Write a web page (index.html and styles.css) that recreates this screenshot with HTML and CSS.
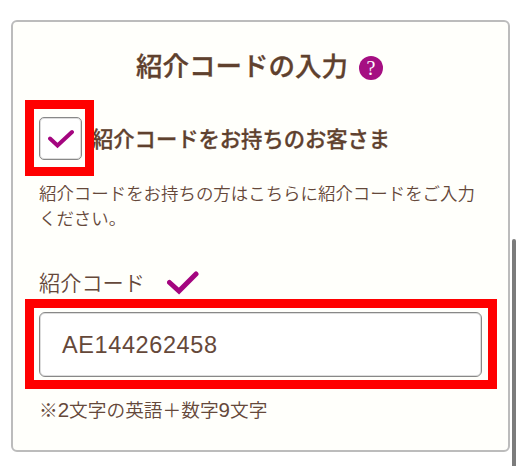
FILE: index.html
```html
<!DOCTYPE html>
<html lang="ja">
<head>
    <meta charset="UTF-8">
    <meta name="viewport" content="width=device-width, initial-scale=1.0">
    <title>紹介コードの入力</title>
    <link rel="stylesheet" href="styles.css">
</head>
<body>
    <section class="card">
        <h1 class="card-title">紹介コードの入力<span class="help">?</span></h1>
        <div class="check-row">
            <div class="checkbox">
                <svg class="check-icon" width="26" height="20" viewBox="0 0 26 20"><path d="M2 9.5L9.5 16.5L24 3"/></svg>
                <span class="mark mark-check"></span>
            </div>
            <span class="check-label">紹介コードをお持ちのお客さま</span>
        </div>
        <p class="desc">紹介コードをお持ちの方はこちらに紹介コードをご入力ください。</p>
        <div class="field-head">
            <span class="field-label">紹介コード</span>
            <svg class="valid-icon" width="32" height="24" viewBox="0 0 32 24"><path d="M2.5 11.5L12 20L29 3"/></svg>
        </div>
        <div class="field">
            <span class="field-value">AE144262458</span>
            <span class="mark mark-field"></span>
        </div>
        <p class="note">※<span class="num">2</span>文字の英語＋数字<span class="num">9</span>文字</p>
    </section>
    <div class="scrollbar"></div>
</body>
</html>
```
FILE: styles.css
```css
* {padding: 0;margin: 0;box-sizing: border-box;}
body {
    position: relative;
    height: 466px;
    padding: 20px 0 0 11px;
    overflow: hidden;
    background: #fff;
    color: #65483a;
    font-family: "Noto Sans CJK JP", sans-serif;
}
.card {
    width: 499px;
    height: 432px;
    padding: 25px 26px 0;
    border: 2px solid #bcbcbc;
    border-radius: 6px;
    background: #fffffb;
}
.card-title {
    display: flex;
    align-items: center;
    justify-content: center;
    height: 36px;
    color: #5f412e;
    font-size: 26.5px;
    font-weight: 500;
    line-height: 36px;
    -webkit-text-stroke: .3px #5f412e;
}
.help {
    width: 24px;
    height: 24px;
    margin: 6px 2px 0 11px;
    border-radius: 50%;
    background: #a50f82;
    color: #fff;
    font-family: "Liberation Serif", serif;
    font-size: 20px;
    font-weight: 400;
    line-height: 24px;
    text-align: center;
    -webkit-text-stroke: 0;
}
.check-row {display: flex;align-items: center;height: 43px;margin-top: 34px;}
.checkbox {
    position: relative;
    display: flex;
    align-items: center;
    justify-content: center;
    width: 43px;
    height: 43px;
    border: 1px solid #888;
    border-radius: 5px;
    background: #fff;
    box-shadow: inset 0 0 0 1px #ddd;
}
.check-icon path, .valid-icon path {fill: none;stroke: #a4057f;stroke-width: 4;stroke-linecap: round;}
.valid-icon path {stroke-width: 5;}
.check-label {
    margin: -3px 0 0 10px;
    color: #5f412e;
    font-size: 21.3px;
    font-weight: 500;
    white-space: nowrap;
    -webkit-text-stroke: .3px #5f412e;
}
.desc {width: 444px;margin-top: 20px;font-size: 17.45px;font-weight: 350;line-height: 25px;}
.field-head {display: flex;align-items: center;height: 32px;margin-top: 36px;}
.field-label {margin-top: -2px;font-size: 21.2px;font-weight: 350;}
.valid-icon {margin: 1px 0 0 22px;}
.field {
    position: relative;
    display: flex;
    align-items: center;
    width: 443px;
    height: 65px;
    margin-top: 14px;
    padding: 2px 0 0 22px;
    border: 1px solid #888;
    border-radius: 6px;
    background: #fff;
    box-shadow: inset 0 0 0 1px #ddd;
}
.field-value {font-family: "Liberation Sans", sans-serif;font-size: 23.5px;letter-spacing: .6px;}
.note {margin-top: 19px;font-size: 18.7px;font-weight: 350;line-height: 26px;}
.num {font-family: "Liberation Sans", sans-serif;font-size: 20.5px;}
/* red frames over the parts to fill in */
.mark {position: absolute;z-index: 1;border: 9px solid #f00;}
.mark-check {top: -18px;left: -15px;width: 69px;height: 76px;}
.mark-field {top: -14px;left: -15px;width: 472px;height: 90px;}
.scrollbar {
    position: absolute;
    top: 239px;
    left: 512px;
    width: 4px;
    height: 240px;
    border-radius: 2px;
    background: #7c7c7c;
}
```
